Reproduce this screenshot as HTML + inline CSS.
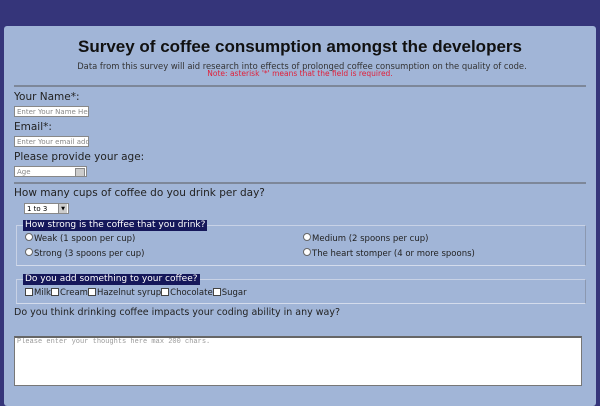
<!DOCTYPE html><html><head><style>
body{margin:0;width:600px;height:400px;background:#35357a;overflow:hidden;font-family:Verdana,"DejaVu Sans",sans-serif;position:relative}
.p{position:absolute;left:4px;top:26px;width:592px;height:380px;background:#a1b5d7;border-radius:3px}
.a{position:absolute;white-space:nowrap;color:#222;font-size:10.5px}
.hr{position:absolute;left:14px;width:572px;height:2px;background:#7d8799}
.in{position:absolute;background:#fff;border:1px solid #888;font-size:7px;color:#888;line-height:10px;padding-left:2px;box-sizing:border-box;overflow:hidden;white-space:nowrap}
.fs{position:absolute;left:16px;width:570px;border:1px solid #c8d2e6;border-right-color:#8b98b0;border-bottom-color:#d4dcec;box-sizing:border-box}
.lg{position:absolute;background:#15175a;color:#fff;font-size:9px;padding:0 2px;line-height:11px}
.r{display:inline-block;width:6px;height:6px;border:1px solid #666;border-radius:50%;background:#fff;margin-right:1px}
.c{display:inline-block;width:6px;height:6px;border:1px solid #444;background:#fff;margin-right:1px;vertical-align:-1px}
</style></head><body>
<div class="p"></div>
<div class="a" style="left:0;width:600px;text-align:center;top:37px;font-size:17px;font-weight:bold;color:#111;font-family:'Liberation Sans',sans-serif">Survey of coffee consumption amongst the developers</div>
<div class="a" style="left:0;width:600px;text-align:center;top:61px;font-size:8.4px;color:#333;padding-left:2px">Data from this survey will aid research into effects of prolonged coffee consumption on the quality of code.</div>
<div class="a" style="left:0;width:600px;text-align:center;top:69px;font-size:7.5px;color:#e0203a;padding-left:0px">Note: asterisk '*' means that the field is required.</div>
<div class="hr" style="top:85px"></div>
<div class="a" style="left:14px;top:91px">Your Name*:</div>
<div class="in" style="left:14px;top:106px;width:75px;height:11px">Enter Your Name Here</div>
<div class="a" style="left:14px;top:121px">Email*:</div>
<div class="in" style="left:14px;top:136px;width:75px;height:11px">Enter Your email address</div>
<div class="a" style="left:14px;top:151px">Please provide your age:</div>
<div class="in" style="left:14px;top:166px;width:73px;height:11px">Age<span style="position:absolute;right:1px;top:1px;width:8px;height:7px;background:#ccc;border:1px solid #888"></span></div>
<div class="hr" style="top:182px"></div>
<div class="a" style="left:14px;top:187px">How many cups of coffee do you drink per day?</div>
<div class="in" style="left:24px;top:203px;width:45px;height:11px;color:#000">1 to 3<span style="position:absolute;right:1px;top:0;width:8px;height:9px;background:#ccc;border-left:1px solid #888;font-size:5px;text-align:center">▼</span></div>
<div class="fs" style="top:225px;height:41px"></div>
<div class="lg" style="left:23px;top:220px">How strong is the coffee that you drink?</div>
<div class="a" style="left:25px;top:233px;font-size:8.5px"><span class="r"></span>Weak (1 spoon per cup)</div>
<div class="a" style="left:25px;top:248px;font-size:8.5px"><span class="r"></span>Strong (3 spoons per cup)</div>
<div class="a" style="left:303px;top:233px;font-size:8.5px"><span class="r"></span>Medium (2 spoons per cup)</div>
<div class="a" style="left:303px;top:248px;font-size:8.5px"><span class="r"></span>The heart stomper (4 or more spoons)</div>
<div class="fs" style="top:279px;height:25px"></div>
<div class="lg" style="left:23px;top:274px">Do you add something to your coffee?</div>
<div class="a" style="left:25px;top:288px;font-size:8.5px"><span class="c"></span>Milk<span class="c"></span>Cream<span class="c"></span>Hazelnut syrup<span class="c"></span>Chocolate<span class="c"></span>Sugar</div>
<div class="a" style="left:14px;top:307px;font-size:9.5px">Do you think drinking coffee impacts your coding ability in any way?</div>
<div class="in" style="left:14px;top:336px;width:568px;height:50px;border:1px solid #777;border-top:2px solid #666;font-family:'Liberation Mono',monospace;font-size:7px;color:#999;line-height:9px">Please enter your thoughts here max 200 chars.</div>
</body></html>
